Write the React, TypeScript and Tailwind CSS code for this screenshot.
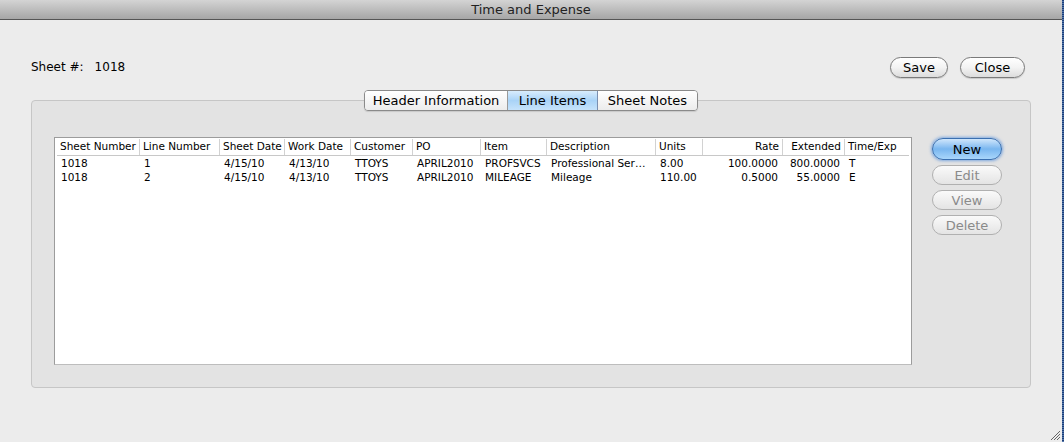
import React from "react";

const COLUMNS = [
  { label: "Sheet Number", w: 83, right: false },
  { label: "Line Number", w: 80, right: false },
  { label: "Sheet Date", w: 65, right: false },
  { label: "Work Date", w: 66, right: false },
  { label: "Customer", w: 62, right: false },
  { label: "PO", w: 68, right: false },
  { label: "Item", w: 66, right: false },
  { label: "Description", w: 109, right: false },
  { label: "Units", w: 47, right: false },
  { label: "Rate", w: 80, right: true },
  { label: "Extended", w: 62, right: true },
  { label: "Time/Exp", w: 65, right: false },
];

const ROWS = [
  ["1018", "1", "4/15/10", "4/13/10", "TTOYS", "APRIL2010", "PROFSVCS", "Professional Ser…", "8.00", "100.0000", "800.0000", "T"],
  ["1018", "2", "4/15/10", "4/13/10", "TTOYS", "APRIL2010", "MILEAGE", "Mileage", "110.00", "0.5000", "55.0000", "E"],
];

const font = "font-['Lucida_Grande','DejaVu_Sans',sans-serif]";

function PillButton({ label, w }: { label: string; w: string }) {
  return (
    <button
      className={`${w} h-[21px] rounded-full border border-[#7a7a7a] bg-gradient-to-b from-white via-[#f3f3f3] to-[#dcdcdc] text-[13px] text-black leading-none shadow-[0_1px_1px_rgba(0,0,0,0.15)]`}
    >
      {label}
    </button>
  );
}

function SideButton({ label, primary }: { label: string; primary?: boolean }) {
  if (primary) {
    return (
      <button className="w-[70px] h-[22px] rounded-full border border-[#3a6fb0] bg-gradient-to-b from-[#cfe6fb] via-[#79b6ef] to-[#a9d6fb] text-[13px] text-black leading-none shadow-[0_0_3px_1px_rgba(60,130,220,0.6)]">
        {label}
      </button>
    );
  }
  return (
    <button className="w-[70px] h-[20px] rounded-full border border-[#b0b0b0] bg-gradient-to-b from-[#fafafa] to-[#e4e4e4] text-[13px] text-[#8a8a8a] leading-none">
      {label}
    </button>
  );
}

export default function App() {
  return (
    <div className={`w-[1064px] h-[442px] flex bg-[#ececec] overflow-hidden ${font}`}>
      <div className="flex-1 flex flex-col">
        {/* Title bar */}
        <div className="h-[20px] shrink-0 flex items-center justify-center bg-gradient-to-b from-[#d4d4d4] to-[#a6a6a6] border-b border-[#555]">
          <span className="text-[13px] text-[#222] leading-none">Time and Expense</span>
        </div>

        <div className="flex-1 flex flex-col px-[31px]">
          {/* Sheet row */}
          <div className="mt-[36px] h-[22px] flex items-center justify-between">
            <div className="flex items-center text-[12px] text-black">
              <span>Sheet #:</span>
              <span className="ml-[11px]">1018</span>
            </div>
            <div className="flex items-center gap-[12px] mr-[6px]">
              <PillButton label="Save" w="w-[58px]" />
              <PillButton label="Close" w="w-[65px]" />
            </div>
          </div>

          {/* Group box */}
          <div className="mt-[22px] h-[288px] rounded-[4px] border border-[#c6c6c6] bg-[#e3e3e3] flex flex-col">
            <div className="-mt-[11px] h-[21px] flex justify-center">
              <div className="flex h-[21px] rounded-[4px] border border-[#8a8a8a] overflow-hidden text-[13px] leading-none shadow-[0_1px_1px_rgba(0,0,0,0.12)]">
                <div className="w-[143px] flex items-center justify-center bg-gradient-to-b from-white to-[#ececec] border-r border-[#9a9a9a] text-black">
                  Header Information
                </div>
                <div className="w-[90px] flex items-center justify-center bg-gradient-to-b from-[#d8ecfc] via-[#a9d3f7] to-[#c6e3fb] border-r border-[#7a8fb0] text-black">
                  Line Items
                </div>
                <div className="w-[99px] flex items-center justify-center bg-gradient-to-b from-white to-[#ececec] text-black">
                  Sheet Notes
                </div>
              </div>
            </div>

            <div className="mt-[26px] flex pl-[22px] pr-[28px]">
              {/* Table */}
              <div className="w-[858px] h-[228px] border border-[#9c9c9c] border-b-[#bdbdbd] bg-white p-[2px] pt-[1px]">
                <div className="flex h-[17px] border-b border-[#c8c8c8] text-[10.5px] text-black">
                  {COLUMNS.map((c, i) => (
                    <div
                      key={c.label}
                      style={{ width: c.w }}
                      className={`shrink-0 flex items-center px-[3px] whitespace-nowrap overflow-hidden ${c.right ? "justify-end" : ""} ${i < COLUMNS.length - 1 ? "border-r border-[#d2d2d2]" : ""}`}
                    >
                      {c.label}
                    </div>
                  ))}
                </div>
                {ROWS.map((row, r) => (
                  <div key={r} className="flex h-[14px] text-[10.5px] text-black leading-none">
                    {row.map((cell, i) => (
                      <div
                        key={i}
                        style={{ width: COLUMNS[i].w }}
                        className={`shrink-0 flex items-center px-[4px] whitespace-nowrap overflow-hidden ${COLUMNS[i].right ? "justify-end pr-[5px]" : ""}`}
                      >
                        {cell}
                      </div>
                    ))}
                  </div>
                ))}
              </div>

              {/* Side buttons */}
              <div className="ml-auto flex flex-col items-center gap-[5px] pt-[1px]">
                <SideButton label="New" primary />
                <SideButton label="Edit" />
                <SideButton label="View" />
                <SideButton label="Delete" />
              </div>
            </div>
          </div>

          <div className="flex-1 flex justify-end items-end">
            <svg width="10" height="10" viewBox="0 0 10 10" className="-mr-[29px] mb-[2px]">
              <path d="M10 1 L1 10 M10 4 L4 10 M10 7 L7 10" stroke="#666" strokeWidth="1" />
            </svg>
          </div>
        </div>
      </div>
      <div className="w-[2px] bg-[repeating-linear-gradient(to_bottom,#1c3f7a_0px,#1c3f7a_1px,#5577aa_1px,#5577aa_2px)]" />
    </div>
  );
}
